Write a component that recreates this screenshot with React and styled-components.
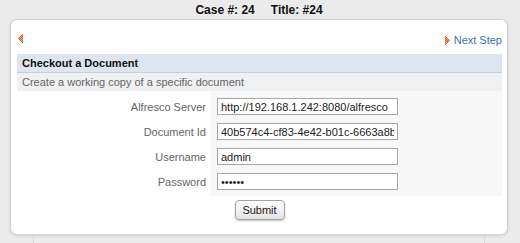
import React from 'react';
import styled, { createGlobalStyle } from 'styled-components';

const GlobalStyle = createGlobalStyle`
  body {
    margin: 0;
    background: #ebebeb;
    font-family: "Liberation Sans", Arial, sans-serif;
    font-size: 11px;
  }
`;

const Page = styled.div`
  width: 520px;
  padding: 0 12px 0 10px;
  box-sizing: border-box;
`;

const CaseHeader = styled.div`
  height: 19px;
  display: flex;
  justify-content: center;
  align-items: center;
  gap: 16px;
  font-size: 12px;
  font-weight: bold;
  color: #111;
`;

const Card = styled.div`
  background: #fff;
  border: 1px solid #d2d2d2;
  border-radius: 7px;
  box-shadow: 0 1px 3px rgba(0, 0, 0, 0.12);
  padding: 0 5px 14px 6px;
`;

const Nav = styled.div`
  height: 34px;
  box-sizing: border-box;
  padding-top: 12px;
  display: flex;
  justify-content: space-between;
  align-items: flex-start;
`;

const PrevLink = styled.a`
  display: block;
  margin-top: 1px;
  cursor: pointer;
`;

const NextLink = styled.a`
  display: flex;
  align-items: center;
  gap: 3px;
  color: #3a6fb4;
  cursor: pointer;
  line-height: 13px;
  padding-top: 2px;
`;

const SectionTitle = styled.div`
  height: 18px;
  line-height: 18px;
  background: #dfe5ee;
  border-bottom: 1px solid #c4d1e0;
  padding-left: 5px;
  font-weight: bold;
  color: #111;
`;

const Description = styled.div`
  height: 18px;
  line-height: 18px;
  background: #eff0f2;
  padding-left: 5px;
  color: #666;
`;

const Form = styled.div`
  display: grid;
  grid-template-columns: 194px 1fr;
  grid-auto-rows: 25px;
  padding: 3px 0 2px;
  background: linear-gradient(90deg, #fff 194px, #f7f7f7 194px);
`;

const Label = styled.label`
  display: flex;
  align-items: center;
  justify-content: flex-end;
  padding-right: 5px;
  color: #666;
`;

const Field = styled.div`
  display: flex;
  align-items: center;
  padding-left: 6px;
`;

const Input = styled.input`
  width: 181px;
  height: 17px;
  box-sizing: border-box;
  border: 1px solid #a6a6a6;
  background: #fff;
  padding: 0 3px;
  font-family: "Liberation Sans", Arial, sans-serif;
  font-size: 11px;
  color: #222;
  outline: none;
`;

const Actions = styled.div`
  display: flex;
  justify-content: center;
  padding-top: 4px;
`;

const SubmitButton = styled.button`
  width: 50px;
  height: 20px;
  border: 1px solid #a3a3a3;
  border-radius: 4px;
  background: linear-gradient(#ffffff, #e4e4e4);
  box-shadow: 0 1px 2px rgba(0, 0, 0, 0.25);
  font-family: "Liberation Sans", Arial, sans-serif;
  font-size: 11px;
  color: #222;
  padding: 0;
`;

const Backdrop = styled.div`
  margin: 0 23px;
  width: 452px;
  height: 12px;
  box-sizing: border-box;
  border-left: 1px solid #d6d6d6;
  border-right: 1px solid #d6d6d6;
`;

const arrowCells = [
  [0, 0, 9],
  [1, 1, 7],
  [2, 2, 5],
  [3, 3, 3],
  [4, 4, 1],
];

function PixelArrow({ flip }) {
  const rects = [];
  arrowCells.forEach(([col, start, count]) => {
    for (let i = 0; i < count; i++) {
      const row = start + i;
      const x = flip ? 5 - col : col;
      rects.push(
        <rect
          key={`${col}-${row}`}
          x={x}
          y={row}
          width="1"
          height="1"
          fill={(col + row) % 2 === 0 ? '#dc5a24' : '#f2a37c'}
        />
      );
    }
  });
  return (
    <svg width="6" height="9" viewBox="0 0 6 9" shapeRendering="crispEdges">
      {rects}
    </svg>
  );
}

const fields = [
  { label: 'Alfresco Server', value: 'http://192.168.1.242:8080/alfresco' },
  { label: 'Document Id', value: '40b574c4-cf83-4e42-b01c-6663a8b2f1d7' },
  { label: 'Username', value: 'admin' },
  { label: 'Password', value: 'secret', type: 'password' },
];

export default function App() {
  return (
    <Page>
      <GlobalStyle />
      <CaseHeader>
        <span>Case #: 24</span>
        <span>Title: #24</span>
      </CaseHeader>
      <Card>
        <Nav>
          <PrevLink>
            <PixelArrow flip />
          </PrevLink>
          <NextLink>
            <PixelArrow />
            Next Step
          </NextLink>
        </Nav>
        <SectionTitle>Checkout a Document</SectionTitle>
        <Description>Create a working copy of a specific document</Description>
        <Form>
          {fields.map((f) => (
            <React.Fragment key={f.label}>
              <Label>{f.label}</Label>
              <Field>
                <Input type={f.type || 'text'} defaultValue={f.value} />
              </Field>
            </React.Fragment>
          ))}
        </Form>
        <Actions>
          <SubmitButton>Submit</SubmitButton>
        </Actions>
      </Card>
      <Backdrop />
    </Page>
  );
}
